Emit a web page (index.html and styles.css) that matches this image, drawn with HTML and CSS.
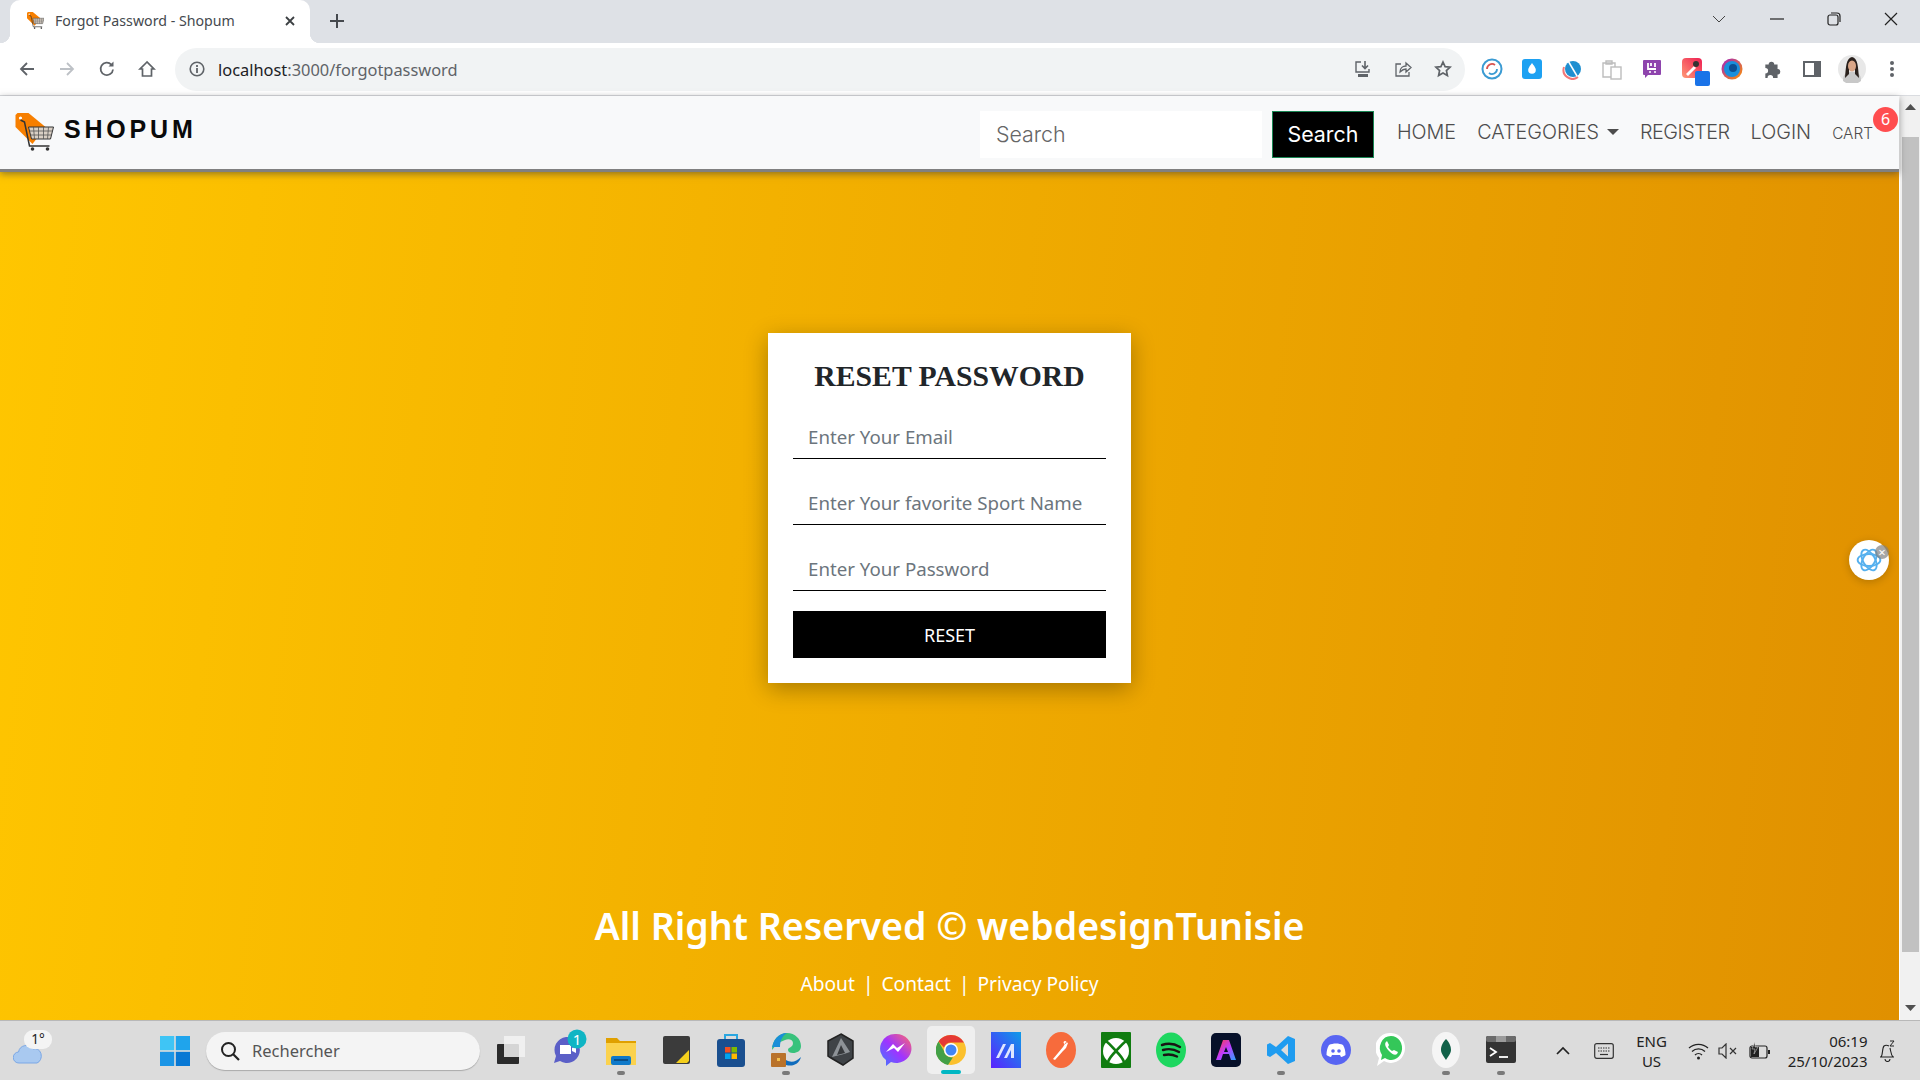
FILE: index.html
```html
<!DOCTYPE html>
<html lang="en">
<head>
<meta charset="utf-8">
<title>Forgot Password - Shopum</title>
<link rel="stylesheet" href="styles.css">
</head>
<body>
<svg class="defs" width="0" height="0" aria-hidden="true">
  <symbol id="shoplogo" viewBox="0 0 38 38">
    <path d="M0 2L2 0h11l17 14-13 17L0 14z" fill="#f77f00"/>
    <circle cx="5" cy="5" r="1.600" fill="#fff"/>
    <path d="M5 7l4 2 5 24h20" fill="none" stroke="#333" stroke-width="1.500"/>
    <path d="M13 14h25l-3 12H16z" fill="#d9cfc4" stroke="#333" stroke-width="1"/>
    <path d="M18 14l1 12M23 14v12M28 14v12M33 14l-1 12M14 18h23M15 22h21" stroke="#555" stroke-width=".8"/>
    <circle cx="17" cy="36" r="1.800" fill="#333"/><circle cx="32" cy="36" r="1.800" fill="#333"/>
  </symbol>
</svg>

<header class="chrome">
  <div class="tabbar">
    <div class="tab">
      <svg width="17" height="17" class="favicon"><use href="#shoplogo"/></svg>
      <span class="tab-title">Forgot Password - Shopum</span>
      <svg class="tab-close" width="12" height="12" viewBox="0 0 12 12"><path d="M2 2l8 8M10 2l-8 8" stroke="#3c4043" stroke-width="1.800"/></svg>
    </div>
    <svg class="newtab" width="16" height="16" viewBox="0 0 16 16"><path d="M8 1v14M1 8h14" stroke="#45494e" stroke-width="2"/></svg>
    <div class="winctl">
      <svg width="16" height="10" viewBox="0 0 16 10"><path d="M2 2l6 6 6-6" fill="none" stroke="#444" stroke-width="1"/></svg>
      <svg width="14" height="14" viewBox="0 0 14 14"><path d="M0 7h14" stroke="#222" stroke-width="1.200"/></svg>
      <svg width="14" height="14" viewBox="0 0 14 14"><rect x="1" y="3" width="10" height="10" rx="2" fill="none" stroke="#222" stroke-width="1.200"/><path d="M4 1h6a3 3 0 0 1 3 3v6" fill="none" stroke="#222" stroke-width="1.200"/></svg>
      <svg width="14" height="14" viewBox="0 0 14 14"><path d="M1 1l12 12M13 1L1 13" stroke="#222" stroke-width="1.200"/></svg>
    </div>
  </div>
  <div class="toolbar">
    <div class="navbtns">
      <svg width="18" height="18" viewBox="0 0 18 18"><path d="M16 9H3M9 3L3 9l6 6" fill="none" stroke="#5f6368" stroke-width="1.800"/></svg>
      <svg width="18" height="18" viewBox="0 0 18 18"><path d="M2 9h13M9 3l6 6-6 6" fill="none" stroke="#bdc1c6" stroke-width="1.800"/></svg>
      <svg width="18" height="18" viewBox="0 0 18 18"><path d="M15 9.500A6.200 6.200 0 1 1 13.300 4.600" fill="none" stroke="#5f6368" stroke-width="1.800"/><path d="M15.500 1.500v5h-5z" fill="#5f6368"/></svg>
      <svg width="18" height="18" viewBox="0 0 18 18"><path d="M9 2L2 9h2.500v7h9V9H16z" fill="none" stroke="#5f6368" stroke-width="1.700"/></svg>
    </div>
    <div class="omnibox">
      <svg width="16" height="16" viewBox="0 0 16 16"><circle cx="8" cy="8" r="6.800" fill="none" stroke="#5f6368" stroke-width="1.600"/><path d="M8 7v5M8 4v2" stroke="#5f6368" stroke-width="1.800"/></svg>
      <span class="url"><span class="url-host">localhost</span>:3000/forgotpassword</span>
      <div class="omni-actions">
        <svg width="18" height="18" viewBox="0 0 18 18"><path d="M7 2H2v10h13V9" fill="none" stroke="#5f6368" stroke-width="1.400"/><path d="M11 1v7M8 5.500l3 3 3-3" fill="none" stroke="#5f6368" stroke-width="1.600"/><path d="M4 14h10v3H4z" fill="#5f6368"/></svg>
        <svg width="18" height="18" viewBox="0 0 18 18"><path d="M7 4H2v12h13v-4" fill="none" stroke="#5f6368" stroke-width="1.300"/><path d="M6 12c0-4 3-6 6-6V3l5 4.500L12 12V9c-2 0-4 1-6 3z" fill="none" stroke="#5f6368" stroke-width="1.300"/></svg>
        <svg width="18" height="18" viewBox="0 0 18 18"><path d="M9 2l2.100 4.600 5 .5-3.700 3.400 1 5L9 13l-4.400 2.500 1-5L1.900 7.100l5-.5z" fill="none" stroke="#5f6368" stroke-width="1.700"/></svg>
      </div>
    </div>
    <div class="extensions">
      <svg width="22" height="22" viewBox="0 0 22 22"><circle cx="11" cy="11" r="9.500" fill="none" stroke="#3b9bd3" stroke-width="2"/><path d="M6 11a5 5 0 0 1 8-4" fill="none" stroke="#d9534f" stroke-width="1.800"/><path d="M16 11a5 5 0 0 1-8 4" fill="none" stroke="#3b9bd3" stroke-width="1.800"/></svg>
      <svg width="22" height="22" viewBox="0 0 22 22"><rect x="1" y="1" width="20" height="20" rx="3" fill="#1da1f2"/><path d="M11 5c3 4 3.800 5.500 3.800 7a3.800 3.800 0 0 1-7.600 0c0-1.500.8-3 3.800-7z" fill="#fff"/></svg>
      <svg width="22" height="22" viewBox="0 0 22 22"><circle cx="12" cy="11" r="8" fill="#1f8fd0"/><path d="M3 9a9 9 0 0 0 14 10" fill="none" stroke="#f27878" stroke-width="2"/><path d="M6 1l10 17" stroke="#fff" stroke-width="1.500"/></svg>
      <svg width="20" height="22" viewBox="0 0 20 22"><path d="M1 5h12v14H1zM4 3h6v3H4z" fill="none" stroke="#bdbdbd" stroke-width="1.400"/><rect x="9" y="9" width="10" height="12" fill="#fff" stroke="#bdbdbd" stroke-width="1.400"/></svg>
      <svg width="20" height="20" viewBox="0 0 20 20"><path d="M2 1h16a1 1 0 0 1 1 1v13a1 1 0 0 1-1 1H6l-3 3v-3H2a1 1 0 0 1-1-1V2a1 1 0 0 1 1-1z" fill="#8e44ad"/><path d="M6 4v6h8M13 4v4M9 4v3" fill="none" stroke="#fff" stroke-width="1.800"/><circle cx="8" cy="13" r="1" fill="#fff"/><circle cx="13" cy="13" r="1" fill="#fff"/></svg>
      <svg class="dropper" width="28" height="28" viewBox="0 0 28 28"><defs><linearGradient id="dg" x1="0" y1="1" x2="1" y2="0"><stop offset="0" stop-color="#ff9a76"/><stop offset="1" stop-color="#ee1d52"/></linearGradient></defs><rect x="0" y="0" width="20" height="20" rx="4" fill="url(#dg)"/><path d="M4 16l8-8 2 2-8 8z" fill="#fff"/><circle cx="14" cy="6" r="3" fill="#333"/><rect x="13" y="13" width="15" height="15" rx="2" fill="#1a73e8"/></svg>
      <svg width="22" height="22" viewBox="0 0 22 22"><defs><linearGradient id="fg" x1="0" y1="0" x2="1" y2="1"><stop offset="0" stop-color="#a020c0"/><stop offset="1" stop-color="#ff9500"/></linearGradient></defs><circle cx="11" cy="11" r="10.500" fill="url(#fg)"/><circle cx="11" cy="11" r="8" fill="#1a8fdc"/><circle cx="12" cy="10" r="4" fill="#0b4f94"/></svg>
      <svg width="20" height="20" viewBox="0 0 18 18"><path d="M3 5h3a2.500 2.500 0 1 1 5 0h3v4a2.500 2.500 0 1 1 0 5v3H10a2.500 2.500 0 1 0-5 0H3v-4a2.500 2.500 0 1 0 0-5z" fill="#5f6368"/></svg>
      <svg width="18" height="18" viewBox="0 0 18 18"><path d="M0 1h18v16H0z" fill="#5f6368"/><path d="M2 3h9v12H2z" fill="#fff"/></svg>
      <svg width="28" height="28" viewBox="0 0 28 28"><circle cx="14" cy="14" r="14" fill="#e8e8e8"/><path d="M5 26c0-8 4-9 9-9s9 1 9 9a14 14 0 0 1-18 0z" fill="#c8c8c8"/><path d="M7 23C8 12 8 3 14 2c6 1 6 10 7 21l-4-4v-4h-6v4z" fill="#2a211d"/><ellipse cx="14" cy="11" rx="4" ry="5.500" fill="#d9a688"/></svg>
      <svg width="6" height="18" viewBox="0 0 6 18"><circle cx="3" cy="3" r="2" fill="#5f6368"/><circle cx="3" cy="9" r="2" fill="#5f6368"/><circle cx="3" cy="15" r="2" fill="#5f6368"/></svg>
    </div>
  </div>
</header>

<div class="viewport">
  <div class="page">
    <nav class="navbar">
      <a class="brand">
        <svg width="39" height="38"><use href="#shoplogo"/></svg>
        <span class="brand-name">SHOPUM</span>
      </a>
      <form class="search">
        <div class="search-input">Search</div>
        <div class="search-btn">Search</div>
      </form>
      <ul class="navlinks">
        <li>HOME</li>
        <li class="dropdown">CATEGORIES<i class="caret"></i></li>
        <li class="reg">REGISTER</li>
        <li>LOGIN</li>
        <li class="cart">CART<span class="badge">6</span></li>
      </ul>
    </nav>
    <main class="content">
      <section class="card">
        <h1>RESET PASSWORD</h1>
        <div class="field">Enter Your Email</div>
        <div class="field">Enter Your favorite Sport Name</div>
        <div class="field">Enter Your Password</div>
        <div class="reset">RESET</div>
      </section>
      <footer class="foot">
        <h2>All Right Reserved © webdesignTunisie</h2>
        <p>About<span class="sep">|</span>Contact<span class="sep">|</span>Privacy Policy</p>
      </footer>
      <div class="bubble">
        <svg width="26" height="26" viewBox="0 0 24 24" fill="none" stroke="#55b0ee" stroke-width="1.700"><ellipse cx="12" cy="12" rx="10.500" ry="5.500"/><ellipse cx="12" cy="12" rx="10.500" ry="5.500" transform="rotate(60 12 12)"/><ellipse cx="12" cy="12" rx="10.500" ry="5.500" transform="rotate(120 12 12)"/></svg>
        <span class="bubble-x">×</span>
      </div>
    </main>
  </div>
  <div class="scrollbar">
    <svg width="11" height="6" viewBox="0 0 11 6"><path d="M5.500 0L11 6H0z" fill="#505050"/></svg>
    <div class="thumb"></div>
    <svg width="11" height="6" viewBox="0 0 11 6"><path d="M5.500 6L11 0H0z" fill="#505050"/></svg>
  </div>
</div>

<div class="taskbar">
  <div class="weather">
    <svg width="30" height="24" viewBox="0 0 30 24"><path d="M6 22a5.500 5.500 0 0 1-.5-11A8 8 0 0 1 20 8a6 7 0 0 1 4 14z" fill="#a9c9f0" stroke="#7aa7e6"/></svg>
    <span class="temp">1°</span>
  </div>
  <div class="tb-item tb-start">
    <svg width="30" height="30" viewBox="0 0 30 30"><rect width="14.200" height="14.200" fill="#3fc5f5"/><rect x="15.800" width="14.200" height="14.200" fill="#1fa4ec"/><rect y="15.800" width="14.200" height="14.200" fill="#1b95e6"/><rect x="15.800" y="15.800" width="14.200" height="14.200" fill="#0878d4"/></svg>
  </div>
  <div class="tb-search">
    <svg width="20" height="20" viewBox="0 0 20 20"><circle cx="8.500" cy="8.500" r="6.500" fill="none" stroke="#222" stroke-width="2"/><path d="M13 13l6 6" stroke="#222" stroke-width="2.200"/></svg>
    <span>Rechercher</span>
  </div>
  <div class="tb-apps">
    <div class="tb-item"><svg width="30" height="30" viewBox="0 0 30 30"><rect x="1" y="9" width="22" height="20" rx="1" fill="#2b2b2b"/><rect x="8" y="1" width="21" height="21" fill="#f3f3f3" fill-opacity=".85"/></svg></div>
    <div class="tb-item"><svg class="tb-over" width="30" height="30" viewBox="0 0 30 30"><path d="M15 2a13 13 0 1 1-6 24l-6 2 2-7A13 13 0 0 1 15 2z" fill="#5b5fc7"/><path d="M9 10h11v9H9zM21 13l4-2v7l-4-2z" fill="#fff"/><circle cx="26" cy="4" r="9.500" fill="#0fb5c4"/><text x="26" y="9.500" class="tb-num">1</text></svg></div>
    <div class="tb-item tb-run"><svg width="30" height="30" viewBox="0 0 30 30"><path d="M0 3h11l3 3h16v4H0z" fill="#e0a000"/><rect y="8" width="30" height="22" fill="#fbd24e"/><rect x="5" y="21" width="20" height="9" rx="2" fill="#0f79c9"/><rect x="8" y="24" width="14" height="2" fill="#0a4f88"/></svg></div>
    <div class="tb-item"><svg width="27" height="28" viewBox="0 0 27 28"><rect width="27" height="28" rx="2" fill="#3b3b3b"/><path d="M26 14L13 27h11l2-2z" fill="#f4cf1c"/></svg></div>
    <div class="tb-item"><svg width="30" height="34" viewBox="0 0 30 34"><path d="M9 6V2h12v4" fill="none" stroke="#2aa6e0" stroke-width="2"/><rect x="1" y="6" width="28" height="28" rx="3" fill="#1a4f8f"/><rect x="9" y="14" width="5.500" height="5.500" fill="#f25022"/><rect x="15.500" y="14" width="5.500" height="5.500" fill="#7fba00"/><rect x="9" y="20.500" width="5.500" height="5.500" fill="#00a4ef"/><rect x="15.500" y="20.500" width="5.500" height="5.500" fill="#ffb900"/></svg></div>
    <div class="tb-item tb-run"><svg width="30" height="36" viewBox="0 0 30 36"><path d="M1 18C1 8 8 1 16 1c8 0 14 6 14 13 0 5-4 7-8 7-3 0-5-1-5-3 0-3 5-2 5-7 0-3-4-5-8-3-6 2-10 6-13 10z" fill="#38c27c"/><path d="M1 18C1 8 8 1 16 1c-5 3-7 8-7 14H1z" fill="#1a8fd8"/><rect x="0" y="21" width="15" height="14" rx="1" fill="#b9722a"/><rect x="6" y="26" width="3" height="3" fill="#f5c04a"/><path d="M15 28c5 3 10 2 15-3-2 7-8 10-15 8z" fill="#0f6cbd"/></svg></div>
    <div class="tb-item"><svg width="28" height="34" viewBox="0 0 28 34"><path d="M14 1l12 7v17l-10 7-12-7-3-2V8z" fill="#3f4347" stroke="#222" stroke-width="1.500"/><path d="M14 5l9 14-6 2-12 3z" fill="#8d9297"/><path d="M14 12l4 8-8 2z" fill="#36393c"/></svg></div>
    <div class="tb-item"><svg width="32" height="34" viewBox="0 0 32 34"><defs><linearGradient id="mg" x1="0" y1="1" x2="1" y2="0"><stop offset="0" stop-color="#3d7bff"/><stop offset=".5" stop-color="#a033ff"/><stop offset="1" stop-color="#ff6b6b"/></linearGradient></defs><path d="M16 1a15 14.500 0 1 1-5 28l-5 4v-6A15 14.500 0 0 1 16 1z" fill="url(#mg)"/><path d="M6 19l7-8 4 4 8-5-7 9-4-4z" fill="#fff"/></svg></div>
    <div class="tb-item tb-chrome"><svg width="30" height="30" viewBox="0 0 30 30"><circle cx="15" cy="15" r="15" fill="#fbc02d"/><path d="M15 0a15 15 0 0 1 13 7.500H15a7.500 7.500 0 0 0-7 5L2.500 6.500A15 15 0 0 1 15 0z" fill="#e53935"/><path d="M2.500 6.500L8 16a7.500 7.500 0 0 0 9 6.200L12 30A15 15 0 0 1 2.500 6.500z" fill="#43a047"/><circle cx="15" cy="15" r="7" fill="#fff"/><circle cx="15" cy="15" r="5.500" fill="#4285f4"/></svg></div>
    <div class="tb-item"><svg width="30" height="36" viewBox="0 0 30 36"><defs><linearGradient id="ma" x1="0" y1="1" x2="1" y2="0"><stop offset="0" stop-color="#5b21ff"/><stop offset="1" stop-color="#0d9be8"/></linearGradient></defs><rect width="30" height="36" fill="url(#ma)"/><path d="M5 26l7-14h3L8 26zM13 26l7-14h3v14h-3v-8l-4 8z" fill="#dfe6ff"/></svg></div>
    <div class="tb-item"><svg width="30" height="36" viewBox="0 0 30 36"><ellipse cx="15" cy="18" rx="15" ry="18" fill="#f76b3c"/><path d="M7 27l10-12 3-5 2 1-2 5-3 3-8 9zM19 9a1.500 1.500 0 1 0 .1 0z" fill="#fff"/></svg></div>
    <div class="tb-item"><svg width="30" height="36" viewBox="0 0 30 36"><rect width="30" height="36" rx="1" fill="#107c10"/><circle cx="15" cy="19" r="13" fill="#fff"/><path d="M5 9C10 13 13 17 15 19C17 17 20 13 25 9M15 19C11 23 8 27 7 30M15 19C19 23 22 27 23 30" fill="none" stroke="#107c10" stroke-width="2.600"/></svg></div>
    <div class="tb-item"><svg width="30" height="36" viewBox="0 0 30 36"><ellipse cx="15" cy="18" rx="15" ry="17.500" fill="#1ed760"/><path d="M6 13c6-2 13-1 18 2M7 18c5-1.500 11-1 16 2M8 23c4-1 9-.5 13 1.500" fill="none" stroke="#191414" stroke-width="2.400" stroke-linecap="round"/></svg></div>
    <div class="tb-item"><svg width="30" height="34" viewBox="0 0 30 34"><defs><linearGradient id="ad" x1="0" y1="0" x2="1" y2="1"><stop offset="0" stop-color="#ff3b3b"/><stop offset=".5" stop-color="#c13bff"/><stop offset="1" stop-color="#29a3ff"/></linearGradient></defs><rect width="30" height="34" rx="5" fill="#061029"/><path d="M12 7h6l7 20h-5l-2-6h-6l-2 6H5z" fill="url(#ad)"/><path d="M15 14l-2 5h4z" fill="#061029"/></svg></div>
    <div class="tb-item tb-run"><svg width="30" height="30" viewBox="0 0 30 30"><path d="M22 1l7 3v22l-7 3-12-11-6 4-3-1.500V9.500L4 8l6 4zM22 8.500l-7 6.500 7 6.500z" fill="#1f9cf0"/></svg></div>
    <div class="tb-item"><svg width="30" height="30" viewBox="0 0 30 30"><circle cx="15" cy="15" r="15" fill="#5865f2"/><path d="M8 10c4-2 10-2 14 0 2 3 2.500 7 2.500 10-1.500 1-3 1.800-4.500 2l-1-2H11l-1 2c-1.500-.2-3-1-4.500-2 0-3 .5-7 2.500-10z" fill="#fff"/><circle cx="12" cy="16" r="1.800" fill="#5865f2"/><circle cx="18" cy="16" r="1.800" fill="#5865f2"/></svg></div>
    <div class="tb-item"><svg width="30" height="36" viewBox="0 0 30 36"><path d="M15 1a14 15 0 1 1-7 28l-7 5 2-8A14 15 0 0 1 15 1z" fill="#fff"/><path d="M15 4a11 12 0 1 1-6 22l-4 2 1-5A11 12 0 0 1 15 4z" fill="#34c759"/><path d="M10 10c-2 2 0 6 3 9s6 5 8 3l1-2-4-2-2 1c-2-1-3-3-4-4l1-2-2-4z" fill="#fff"/></svg></div>
    <div class="tb-item tb-run"><svg width="28" height="36" viewBox="0 0 28 36"><ellipse cx="14" cy="18" rx="14" ry="18" fill="#f5f5f5"/><path d="M14 7c4 4 5 8 5 11s-3 7-5 10c-2-3-5-7-5-10s1-7 5-11z" fill="#116149"/></svg></div>
    <div class="tb-item tb-run"><svg width="30" height="27" viewBox="0 0 30 27"><rect width="30" height="27" rx="2" fill="#333"/><rect width="30" height="6" rx="2" fill="#6b6b6b"/><rect x="10" width="10" height="6" fill="#9b9b9b"/><path d="M4 12l6 4-6 4" fill="none" stroke="#fff" stroke-width="1.800"/><path d="M13 21h9" stroke="#fff" stroke-width="1.800"/></svg></div>
  </div>
  <div class="tray">
    <svg class="tray-chev" width="16" height="10" viewBox="0 0 16 10"><path d="M2 8l6-6 6 6" fill="none" stroke="#222" stroke-width="1.700"/></svg>
    <svg class="tray-kb" width="20" height="16" viewBox="0 0 20 16"><rect x=".7" y=".7" width="18.600" height="14.600" rx="2" fill="none" stroke="#333" stroke-width="1.200"/><path d="M4 5h12M4 8h12" stroke="#333" stroke-width="1.200" stroke-dasharray="1.500 1"/><path d="M6 11.500h8" stroke="#333" stroke-width="1.200"/></svg>
    <div class="tray-lang"><span>ENG</span><span>US</span></div>
    <svg class="tray-wifi" width="21" height="18" viewBox="0 0 21 18"><path d="M1 6a14 14 0 0 1 19 0M4 9.500a9.500 9.500 0 0 1 13 0M7 13a5 5 0 0 1 7 0" fill="none" stroke="#222" stroke-width="1.300"/><circle cx="10.500" cy="16" r="1.500" fill="#222"/></svg>
    <svg class="tray-snd" width="20" height="16" viewBox="0 0 20 16"><path d="M1 5h3l4-4v14l-4-4H1z" fill="none" stroke="#333" stroke-width="1.200"/><path d="M12 5l6 6M18 5l-6 6" stroke="#333" stroke-width="1.200"/></svg>
    <svg class="tray-bat" width="21" height="18" viewBox="0 0 21 18"><rect x="1" y="4" width="17" height="12" rx="2" fill="none" stroke="#222" stroke-width="1.200"/><path d="M2 5h8v10H2z" fill="#222"/><path d="M19 8h2v4h-2z" fill="#222"/><path d="M6 0L3 7h3l-1 5 4-7H6z" fill="#222" stroke="#dcdcdc" stroke-width=".5"/></svg>
    <div class="tray-clock"><span>06:19</span><span>25/10/2023</span></div>
    <svg class="tray-bell" width="18" height="22" viewBox="0 0 18 22"><path d="M2 17c2-2 1-9 3-11 2-1.500 3-1 5 0M11 8c1 4 1 7 3 9M1 17h14M6 19a2.500 2.500 0 0 0 5 0" fill="none" stroke="#222" stroke-width="1.100"/><path d="M11 1h4l-4 5h4" fill="none" stroke="#222"/></svg>
  </div>
</div>
</body>
</html>
```
FILE: styles.css
```css
* { box-sizing: border-box; }
html, body { margin: 0; height: 100%; }
body {
  width: 1920px;
  height: 1080px;
  overflow: hidden;
  display: flex;
  flex-direction: column;
  font-family: "Noto Sans", "Open Sans", sans-serif;
  background: #fff;
}
.defs { position: absolute; }
svg { display: block; flex: none; }

/* browser chrome */
.chrome { flex: none; }
.tabbar {
  height: 43px;
  background: #dee1e6;
  display: flex;
  align-items: flex-end;
  padding-left: 10px;
}
.tab {
  position: relative;
  width: 300px;
  height: 43px;
  background: #fff;
  border-radius: 10px 10px 0 0;
  display: flex;
  align-items: center;
  padding: 1px 14px 3px 17px;
}
.tab::before, .tab::after {
  content: "";
  position: absolute;
  bottom: 0;
  width: 10px;
  height: 10px;
}
.tab::before { left: -10px; background: radial-gradient(circle at 0 0, #dee1e6 10px, #fff 10.500px); }
.tab::after { right: -10px; background: radial-gradient(circle at 100% 0, #dee1e6 10px, #fff 10.500px); }
.tab-title {
  margin-left: 11px;
  font-size: 14.200px;
  color: #45494e;
  white-space: nowrap;
}
.tab-close { margin-left: auto; }
.newtab { margin: 0 0 14px 19px; }
.winctl {
  margin-left: auto;
  height: 38px;
  align-self: flex-start;
  display: flex;
  align-items: center;
  gap: 43px;
  padding-right: 22px;
}
.toolbar {
  height: 53px;
  background: #fff;
  border-bottom: 1px solid #dadce0;
  display: flex;
  align-items: center;
  padding-bottom: 5px;
  padding-top: 5px;
}
.navbtns {
  width: 175px;
  display: flex;
  gap: 22px;
  padding-left: 18px;
}
.omnibox {
  width: 1290px;
  height: 43px;
  background: #f1f3f4;
  border-radius: 22px;
  display: flex;
  align-items: center;
  padding: 0 13px 0 14px;
}
.url {
  margin-left: 13px;
  font-size: 16.400px;
  color: #5f6368;
  white-space: nowrap;
}
.url-host { color: #202124; }
.omni-actions {
  margin-left: auto;
  display: flex;
  gap: 22px;
}
.extensions {
  flex: 1;
  display: grid;
  grid-template-columns: repeat(11, 40px);
  align-items: center;
  justify-items: center;
  padding-left: 7px;
}
.dropper { margin: 6px 0 0 8px; }

/* page */
.viewport { flex: 1; display: flex; min-height: 0; }
.page { flex: 1; display: flex; flex-direction: column; min-width: 0; }
.navbar {
  position: relative;
  z-index: 1;
  flex: none;
  height: 76px;
  background: #f8f9fa;
  border-bottom: 3px solid #808080;
  box-shadow: 0 2px 7px rgba(60, 60, 60, .55);
  display: flex;
  align-items: center;
  padding: 0 0 0 15px;
}
.brand { display: flex; align-items: center; margin-top: -2px; }
.brand-name {
  margin-left: 10px;
  margin-top: -4px;
  font: 700 25px "Liberation Sans", Arial, sans-serif;
  letter-spacing: 3.800px;
  color: #0a0a0a;
}
.search {
  margin-left: auto;
  margin-top: 4px;
  display: flex;
  gap: 10px;
  font-family: Inter, sans-serif;
  font-size: 21.400px;
}
.search-input {
  width: 282px;
  height: 47px;
  background: #fff;
  color: #666;
  font-weight: 300;
  padding-left: 16px;
  line-height: 47px;
}
.search-btn {
  width: 102px;
  height: 47px;
  background: #000;
  border: 1px solid #198754;
  color: #fff;
  text-align: center;
  line-height: 45px;
}
.navlinks {
  list-style: none;
  display: flex;
  align-items: center;
  gap: 21px;
  margin: 0 26px 2px 23px;
  padding: 0;
  font-family: Inter, sans-serif;
  font-weight: 300;
  font-size: 19.800px;
  color: #4d4d4d;
}
.dropdown { display: flex; align-items: center; }
.reg { letter-spacing: -.5px; }
.caret {
  margin-left: 8px;
  border-left: 6px solid transparent;
  border-right: 6px solid transparent;
  border-top: 6px solid #4d4d4d;
}
.cart { position: relative; font-size: 15.400px; margin-top: 3px; }
.badge {
  position: absolute;
  left: 41px;
  top: -17px;
  width: 25px;
  height: 25px;
  border-radius: 50%;
  background: #ff4d4f;
  color: #fff;
  font-size: 16px;
  font-weight: 400;
  font-family: "Noto Sans", sans-serif;
  text-align: center;
  line-height: 25px;
}
.content {
  position: relative;
  flex: 1;
  background: linear-gradient(97deg, #ffc600 0%, #e09000 100%);
  display: flex;
  flex-direction: column;
  align-items: center;
  padding-top: 161px;
}
.card {
  width: 363px;
  height: 350px;
  background: #fff;
  box-shadow: 0 6px 22px rgba(0, 0, 0, .3);
  padding: 21px 25px 0;
  display: flex;
  flex-direction: column;
}
.card h1 {
  margin: 0 0 13px;
  font: 700 29.700px "Liberation Serif", serif;
  color: #212529;
  text-align: center;
  line-height: 44px;
  white-space: nowrap;
}
.field {
  height: 48px;
  border-bottom: 1px solid #000;
  margin-bottom: 18px;
  padding: 8px 0 0 15px;
  font-size: 18.700px;
  line-height: 36px;
  color: #6c757d;
  white-space: nowrap;
}
.reset {
  margin-top: 2px;
  height: 47px;
  background: #000;
  color: #fff;
  text-align: center;
  font-size: 18px;
  line-height: 48px;
}
.foot {
  margin-top: auto;
  padding-bottom: 22px;
  text-align: center;
  color: #fff;
}
.foot h2 {
  margin: 0;
  font-size: 37.500px;
  font-weight: 600;
  line-height: 52px;
  white-space: nowrap;
}
.foot p {
  margin: 18px 0 0;
  font-size: 19.200px;
  line-height: 28px;
}
.sep { margin: 0 8px; }
.bubble {
  position: absolute;
  left: 1849px;
  top: 368px;
  width: 40px;
  height: 40px;
  border-radius: 50%;
  background: #fff;
  box-shadow: 0 2px 8px rgba(0, 0, 0, .2);
  display: flex;
  align-items: center;
  justify-content: center;
}
.bubble-x {
  position: absolute;
  left: 26px;
  top: 5px;
  width: 14px;
  height: 14px;
  border-radius: 50%;
  background: rgba(130, 130, 130, .7);
  color: #fff;
  font-size: 13px;
  line-height: 14px;
  text-align: center;
}
.scrollbar {
  flex: none;
  width: 21px;
  background: #f1f1f1;
  border-left: 1px solid #fff;
  display: flex;
  flex-direction: column;
  align-items: center;
  padding: 8px 0 9px;
}
.thumb {
  width: 17px;
  height: 815px;
  margin-top: 27px;
  margin-bottom: auto;
  background: #c1c1c1;
}

/* taskbar */
.taskbar {
  position: relative;
  flex: none;
  height: 60px;
  background: #dcdcdc;
  border-top: 1px solid #b8b8b8;
  display: flex;
  align-items: center;
}
.weather { position: relative; width: 146px; padding: 4px 0 0 13px; }
.temp {
  position: absolute;
  left: 24px;
  top: -7px;
  width: 28px;
  height: 19px;
  border-radius: 9px;
  background: #f4f4f4;
  font-size: 13.500px;
  line-height: 19px;
  text-align: center;
  color: #222;
}
.tb-item {
  position: relative;
  width: 55px;
  height: 48px;
  display: flex;
  align-items: center;
  justify-content: center;
}
.tb-start { margin-left: 1px; }
.tb-search {
  width: 274px;
  height: 38px;
  margin-left: 4px;
  border-radius: 19px;
  background: #f4f4f4;
  box-shadow: 0 1px 1px #aaa;
  display: flex;
  align-items: center;
  gap: 12px;
  padding-left: 14px;
  font-size: 16.500px;
  color: #555;
}
.tb-apps { display: flex; margin: 0 0 2px 3.500px; }
.tb-over { overflow: visible; }
.tb-run::after {
  content: "";
  position: absolute;
  left: 23px;
  bottom: -1px;
  width: 8px;
  height: 4px;
  border-radius: 2px;
  background: #7a7a7a;
}
.tb-chrome { background: #efefef; border-radius: 5px; width: 48px; margin: 0 3.500px; }
.tb-chrome::after {
  content: "";
  position: absolute;
  left: 14px;
  bottom: 0;
  width: 20px;
  height: 4px;
  border-radius: 2px;
  background: #00b7c3;
}
.tb-num { font: 15px "Noto Sans", sans-serif; fill: #fff; text-anchor: middle; }
.tray {
  flex: 1;
  display: flex;
  align-items: center;
  padding-left: 26px;
  color: #222;
  font-size: 15px;
  line-height: 20px;
}
.tray-kb { margin-left: 23px; }
.tray-lang {
  width: 40px;
  margin-left: 18px;
  display: flex;
  flex-direction: column;
  align-items: center;
}
.tray-wifi { margin-left: 16px; }
.tray-snd { margin-left: 9px; }
.tray-bat { margin-left: 11px; }
.tray-clock {
  width: 80px;
  margin-left: 18px;
  display: flex;
  flex-direction: column;
  align-items: flex-end;
  white-space: nowrap;
}
.tray-bell { margin-left: 11px; }
```
